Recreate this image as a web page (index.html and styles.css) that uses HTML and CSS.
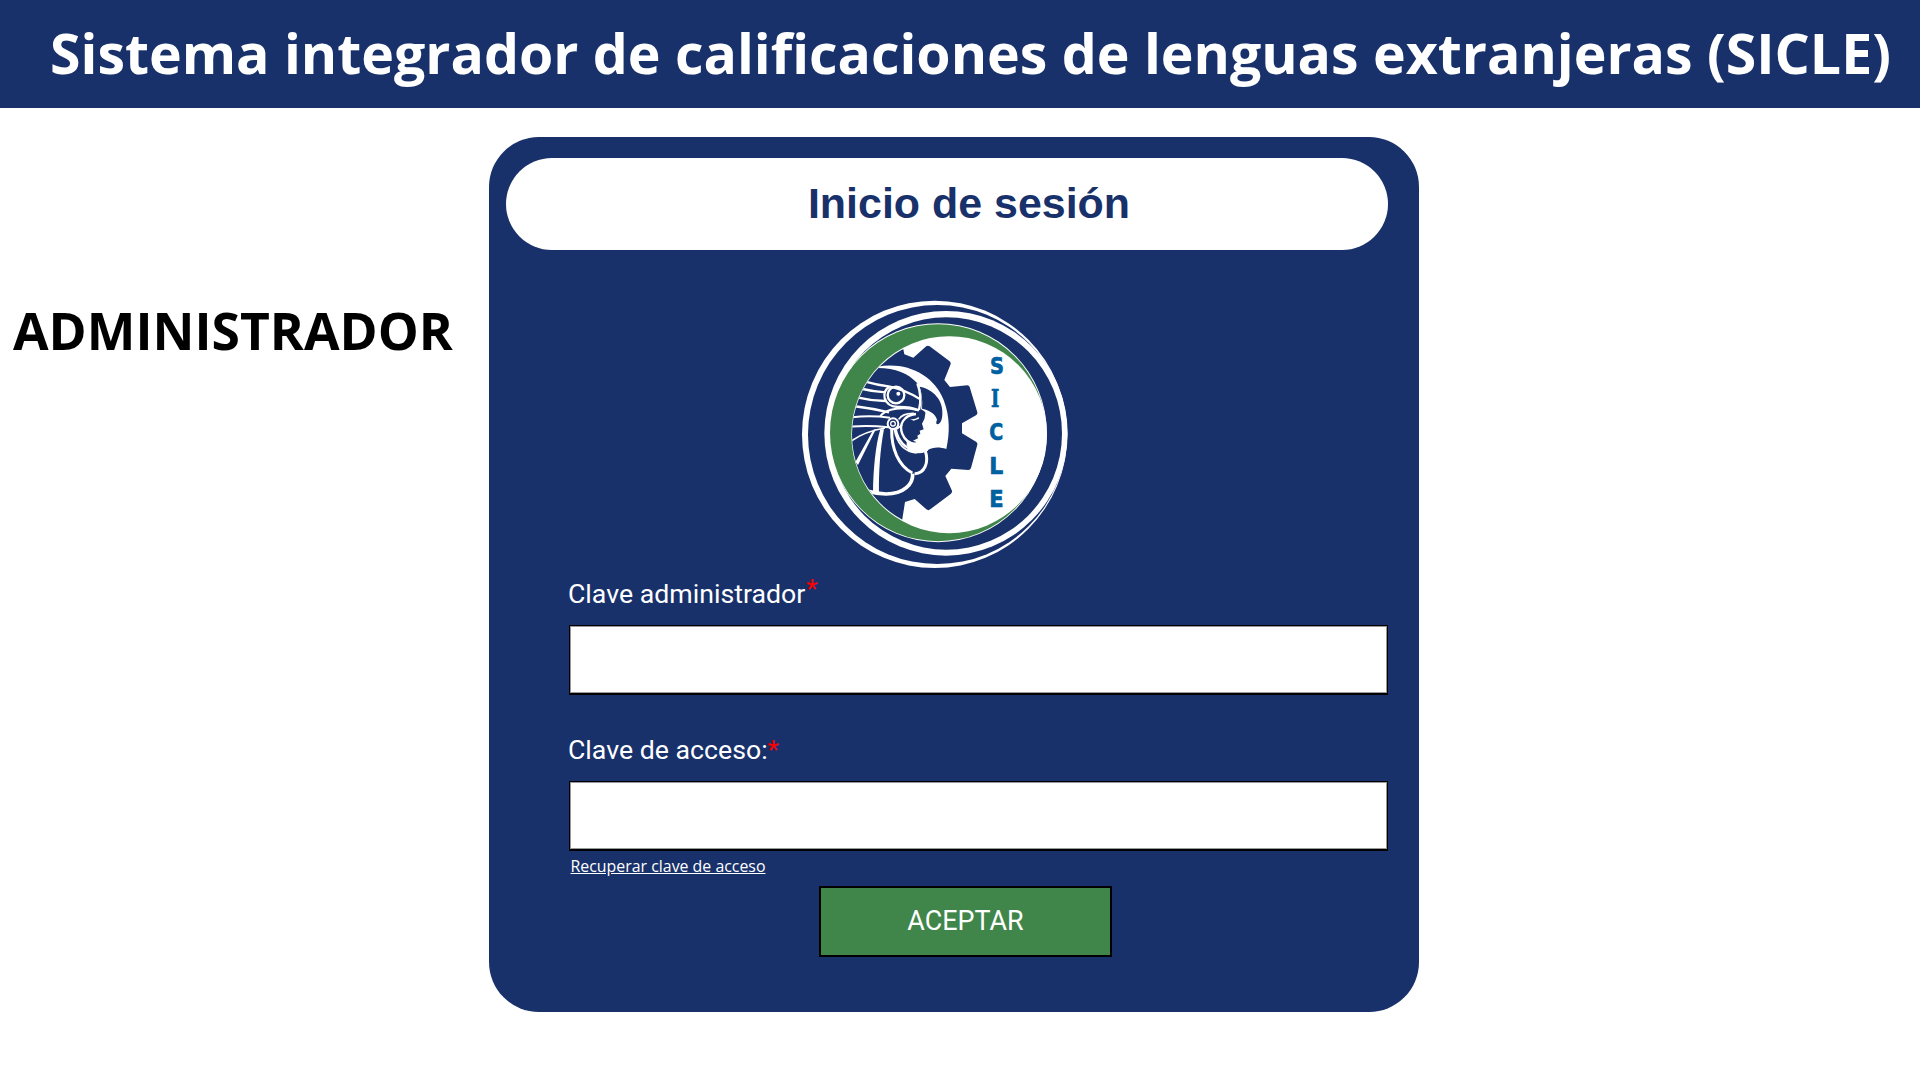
FILE: index.html
```html
<!DOCTYPE html>
<html lang="es">
<head>
<meta charset="utf-8">
<title>SICLE</title>
<link rel="stylesheet" href="styles.css">
</head>
<body>
<header class="topbar"><h1>Sistema integrador de calificaciones de lenguas extranjeras (SICLE)</h1></header>
<main class="page">
  <aside class="role"><h2>ADMINISTRADOR</h2></aside>
  <section class="card">
    <h3 class="card-title">Inicio de sesión</h3>
    <svg class="logo" viewBox="0 0 870 870" role="img" aria-label="SICLE">
      <defs>
        <clipPath id="disc"><circle cx="478" cy="434" r="292"/></clipPath>
      </defs>
      <ellipse cx="434" cy="433" rx="398" ry="401" fill="#fff"/>
      <ellipse cx="442" cy="433.500" rx="388" ry="388.500" fill="#19316a"/>
      <ellipse cx="468" cy="430" rx="365" ry="367" fill="#fff"/>
      <ellipse cx="469" cy="430.500" rx="347" ry="348.500" fill="#19316a"/>
      <ellipse cx="444" cy="428" rx="326.500" ry="328.500" fill="#fff"/>
      <ellipse cx="444" cy="428" rx="324" ry="325.500" fill="#40864b"/>
      <ellipse cx="477.500" cy="434" rx="293.500" ry="295.500" fill="#fff"/>
      <g clip-path="url(#disc)">
        <path fill="#19316a" d="M150 178H340L343 193L370 203L407 170Q413 165 419 169L479 214Q484 218 481 225L463 270L480 291L532 286Q537 286 539 291L562 367Q563 373 558 376L516 400V430L558 455Q563 458 562 464L543 534Q541 540 535 540L484 536L466 558L486 602Q487 608 482 612L421 658Q415 663 409 658L374 627L345 636L335 700H150Z"/>
        <path fill="#fff" d="M262 230C350 214 431 254 461 330C481 382 479 430 469 477C448 470 427 471 413 481C391 491 365 486 350 466L350 450C362 462 373 462 379 456L369 452L384 445L382 437L391 431L389 422L401 418L396 401L404 385L405 369L393 357C398 326 394 301 382 280C353 249 319 235 262 234Z"/>
        <path fill="#19316a" d="M389 290C430 297 461 332 457 374C456 391 451 401 442 403Q436 401 441 389C435 368 414 360 396 356Q399 319 389 290Z"/>
        <path fill="#19316a" d="M376 376L386 361Q397 356 406 367Q407 378 400 382L386 380Z"/>
        <g fill="none" stroke="#fff">
          <path stroke-width="7" d="M382 280Q397 320 387 360M226 275Q260 285 300 290Q345 300 388 326"/>
          <path stroke-width="7" d="M218 297Q250 305 287 307M205 323Q245 333 287 333M190 348Q245 355 297 367M298 290Q279 302 284 324Q291 350 323 351Q360 350 387 361"/>
          <circle cx="318" cy="315" r="25" stroke-width="7"/>
          <path stroke-width="6" d="M270 379C290 355 340 349 385 361M185 382Q240 375 300 383M184 410Q235 405 296 412"/>
          <path stroke-width="5" d="M326 388Q338 369 372 370M320 417L336 405"/>
          <path stroke-width="7" d="M378 372C340 375 326 405 337 432C344 450 356 460 378 462"/>
          <path stroke-width="7" d="M317 418C325 455 346 476 378 483"/>
          <path stroke-width="5" d="M313 418C321 463 345 485 380 489"/>
          <path stroke-width="9" d="M305 418C304 475 325 528 367 549"/>
          <path stroke-width="9" d="M406 483C417 516 405 550 374 551"/>
          <path stroke-width="11" d="M368 551C370 582 342 612 288 612Q258 611 228 602"/>
          <path stroke-width="5" d="M182 454Q225 424 285 414"/>
        </g>
        <path fill="#fff" d="M196 516L250 419L258 417L204 525ZM271 418H282C270 480 266 550 267 608H249C250 540 256 468 271 418ZM355 463Q377 482 414 473L414 482Q382 499 352 480Z"/>
        <circle cx="309" cy="401" r="16" fill="#19316a" stroke="#fff" stroke-width="6"/>
        <circle cx="309" cy="401" r="7" fill="none" stroke="#fff" stroke-width="4"/>
        <circle cx="325" cy="311" r="6" fill="#fff"/>
        <path fill="#fff" d="M358 386Q372 391 386 381L387 386L371 392Z"/>
      </g>
      <g class="logo-letters" fill="#0061a1" stroke="#0061a1" stroke-width="2">
        <text x="600" y="251" textLength="42" lengthAdjust="spacingAndGlyphs">S</text>
        <text x="603" y="350" textLength="25" lengthAdjust="spacingAndGlyphs" class="slab">I</text>
        <text x="598" y="451" textLength="42" lengthAdjust="spacingAndGlyphs">C</text>
        <text x="598" y="551" textLength="42" lengthAdjust="spacingAndGlyphs">L</text>
        <text x="598" y="650" textLength="43" lengthAdjust="spacingAndGlyphs">E</text>
      </g>
    </svg>
    <form class="login">
      <label for="clave">Clave administrador<span class="required raised">*</span></label>
      <input id="clave" type="text">
      <label for="acceso" class="second">Clave de acceso:<span class="required">*</span></label>
      <input id="acceso" type="password">
      <a class="recover" href="#">Recuperar clave de acceso</a>
      <button type="button">ACEPTAR</button>
    </form>
  </section>
</main>
</body>
</html>
```
FILE: styles.css
```css
* { box-sizing: border-box; }
body { margin: 0; background: #fff; font-family: "Open Sans", sans-serif; overflow: hidden; }
h1, h2, h3 { margin: 0; white-space: nowrap; }

.topbar { height: 108px; padding: 15px 0 0 50px; background: #19316a; color: #fff; }
.topbar h1 { font-size: 55.4px; line-height: 75px; font-weight: 700; }

.page { display: flex; padding-top: 29px; }
.role { width: 489px; padding: 158px 0 0 13px; }
.role h2 { font-size: 51.6px; line-height: 71px; font-weight: 700; color: #000; }

.card { width: 930px; height: 875px; padding: 21px 31px 0 17px; border-radius: 50px; background: #19316a; }
.card-title {
  height: 92px; padding-left: 44px; border-radius: 46px; background: #fff; color: #19316a;
  font: 700 42.95px/91px "Liberation Sans", Arial, sans-serif; text-align: center;
}
.logo { display: block; width: 290px; height: 290px; margin: 40px 0 0 284px; }
.logo-letters { font: 700 70px "DejaVu Sans", sans-serif; }
.logo-letters .slab { font-family: "DejaVu Serif", serif; }

.login { display: flex; flex-direction: column; margin: -2px 0 0 62px; font-family: Roboto, sans-serif; color: #fff; }
.login label { height: 32px; margin-bottom: 15px; font-size: 26.7px; line-height: 32px; white-space: nowrap; }
.login .second { margin: 40px 0 15px; }
.required { color: #f00; }
.raised { position: relative; top: -5px; left: 1px; }
.login input {
  width: 819px; height: 69px; margin-left: 1px; padding: 0 12px; border: 1px solid #000; border-radius: 0;
  background: #fff; box-shadow: inset 0 0 0 1px #999, 0 1px 0 #000; font: 27px Roboto, sans-serif;
}
.recover { align-self: flex-start; margin: 5px 0 0 2.5px; height: 22px; color: #fff; font: 15.9px/22px "Open Sans", sans-serif; }
.login button {
  width: 293px; height: 71px; margin: 9px 0 0 251px; padding: 0 0 2px; border: 2px solid #000; background: #40864b;
  color: #fff; font: 26.9px/32px Roboto, sans-serif;
}
```
